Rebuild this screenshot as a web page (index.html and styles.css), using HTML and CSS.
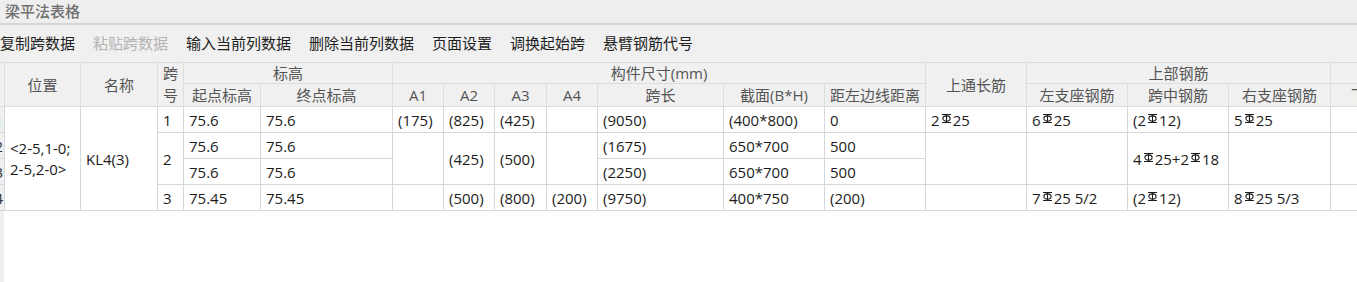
FILE: index.html
```html
<!DOCTYPE html>
<html lang="zh-CN">
<head>
<meta charset="utf-8">
<title>梁平法表格</title>
<link rel="stylesheet" href="styles.css">
</head>
<body>
<div class="titlebar"><span class="title">梁平法表格</span></div>
<div class="toolbar">
  <span class="tool">复制跨数据</span>
  <span class="tool disabled">粘贴跨数据</span>
  <span class="tool">输入当前列数据</span>
  <span class="tool">删除当前列数据</span>
  <span class="tool">页面设置</span>
  <span class="tool">调换起始跨</span>
  <span class="tool">悬臂钢筋代号</span>
</div>
<div class="grid-wrap">
<table class="grid">
  <colgroup>
    <col class="c-rh"><col class="c-pos"><col class="c-name"><col class="c-span">
    <col class="c-elev"><col class="c-elev2">
    <col class="c-a"><col class="c-a"><col class="c-a3"><col class="c-a">
    <col class="c-len"><col class="c-w"><col class="c-w"><col class="c-w">
    <col class="c-w"><col class="c-w"><col class="c-w2">
    <col class="c-w"><col class="c-w"><col class="c-w">
  </colgroup>
  <thead>
    <tr class="h1">
      <th class="rh" rowspan="2"></th>
      <th rowspan="2">位置</th>
      <th rowspan="2">名称</th>
      <th rowspan="2" class="kua"><div class="kua-top">跨</div><div class="kua-bot">号</div></th>
      <th colspan="2">标高</th>
      <th colspan="7">构件尺寸(mm)</th>
      <th rowspan="2">上通长筋</th>
      <th colspan="3">上部钢筋</th>
      <th colspan="3"></th>
    </tr>
    <tr class="h2">
      <th>起点标高</th>
      <th>终点标高</th>
      <th>A1</th>
      <th>A2</th>
      <th>A3</th>
      <th>A4</th>
      <th>跨长</th>
      <th>截面(B*H)</th>
      <th>距左边线距离</th>
      <th>左支座钢筋</th>
      <th>跨中钢筋</th>
      <th>右支座钢筋</th>
      <th>下通长筋</th>
      <th></th>
      <th></th>
    </tr>
  </thead>
  <tbody>
    <tr class="r1">
      <th class="rh">1</th>
      <td rowspan="4" class="pos">&lt;2-5,1-0;<br>2-5,2-0&gt;</td>
      <td rowspan="4">KL4(3)</td>
      <td>1</td>
      <td>75.6</td>
      <td>75.6</td>
      <td>(175)</td>
      <td>(825)</td>
      <td>(425)</td>
      <td></td>
      <td>(9050)</td>
      <td>(400*800)</td>
      <td>0</td>
      <td>2<svg class="rb" viewBox="0 0 11 9"><path d="M1 0.5H10M1 8.5H10M5.5 0.5V8.5"/><ellipse cx="5.5" cy="4.5" rx="3.6" ry="2.6"/></svg>25</td>
      <td>6<svg class="rb" viewBox="0 0 11 9"><path d="M1 0.5H10M1 8.5H10M5.5 0.5V8.5"/><ellipse cx="5.5" cy="4.5" rx="3.6" ry="2.6"/></svg>25</td>
      <td>(2<svg class="rb" viewBox="0 0 11 9"><path d="M1 0.5H10M1 8.5H10M5.5 0.5V8.5"/><ellipse cx="5.5" cy="4.5" rx="3.6" ry="2.6"/></svg>12)</td>
      <td>5<svg class="rb" viewBox="0 0 11 9"><path d="M1 0.5H10M1 8.5H10M5.5 0.5V8.5"/><ellipse cx="5.5" cy="4.5" rx="3.6" ry="2.6"/></svg>25</td>
      <td></td><td></td><td></td>
    </tr>
    <tr class="r2">
      <th class="rh">2</th>
      <td rowspan="2">2</td>
      <td>75.6</td>
      <td>75.6</td>
      <td rowspan="2"></td>
      <td rowspan="2">(425)</td>
      <td rowspan="2">(500)</td>
      <td rowspan="2"></td>
      <td>(1675)</td>
      <td>650*700</td>
      <td>500</td>
      <td rowspan="2"></td>
      <td rowspan="2"></td>
      <td rowspan="2">4<svg class="rb" viewBox="0 0 11 9"><path d="M1 0.5H10M1 8.5H10M5.5 0.5V8.5"/><ellipse cx="5.5" cy="4.5" rx="3.6" ry="2.6"/></svg>25+2<svg class="rb" viewBox="0 0 11 9"><path d="M1 0.5H10M1 8.5H10M5.5 0.5V8.5"/><ellipse cx="5.5" cy="4.5" rx="3.6" ry="2.6"/></svg>18</td>
      <td rowspan="2"></td>
      <td rowspan="2"></td><td rowspan="2"></td><td rowspan="2"></td>
    </tr>
    <tr class="r3">
      <th class="rh">3</th>
      <td>75.6</td>
      <td>75.6</td>
      <td>(2250)</td>
      <td>650*700</td>
      <td>500</td>
    </tr>
    <tr class="r4">
      <th class="rh">4</th>
      <td>3</td>
      <td>75.45</td>
      <td>75.45</td>
      <td></td>
      <td>(500)</td>
      <td>(800)</td>
      <td>(200)</td>
      <td>(9750)</td>
      <td>400*750</td>
      <td>(200)</td>
      <td></td>
      <td>7<svg class="rb" viewBox="0 0 11 9"><path d="M1 0.5H10M1 8.5H10M5.5 0.5V8.5"/><ellipse cx="5.5" cy="4.5" rx="3.6" ry="2.6"/></svg>25 5/2</td>
      <td>(2<svg class="rb" viewBox="0 0 11 9"><path d="M1 0.5H10M1 8.5H10M5.5 0.5V8.5"/><ellipse cx="5.5" cy="4.5" rx="3.6" ry="2.6"/></svg>12)</td>
      <td>8<svg class="rb" viewBox="0 0 11 9"><path d="M1 0.5H10M1 8.5H10M5.5 0.5V8.5"/><ellipse cx="5.5" cy="4.5" rx="3.6" ry="2.6"/></svg>25 5/3</td>
      <td></td><td></td><td></td>
    </tr>
  </tbody>
</table>
</div>
</body>
</html>
```

FILE: styles.css
```css
* { box-sizing: border-box; }

html, body {
  margin: 0;
  padding: 0;
}

body {
  width: 1357px;
  height: 282px;
  overflow: hidden;
  background: #f0f0f0;
  font-family: "Open Sans", "Noto Sans CJK SC", sans-serif;
}

.titlebar {
  height: 25px;
  background: #eeeeee;
  border-bottom: 2px solid #d6d6d6;
  display: flex;
  align-items: center;
  padding-left: 5px;
}

.title {
  font-size: 15px;
  line-height: 1;
  color: #707070;
  font-weight: 500;
}

.toolbar {
  height: 37px;
  display: flex;
  align-items: center;
  gap: 18px;
  font-size: 15px;
  color: #1e1e1e;
}

.tool {
  line-height: 1;
  white-space: nowrap;
}

.tool.disabled {
  color: #b3b3b3;
}

.grid-wrap {
  height: 220px;
  overflow: hidden;
  background: linear-gradient(to right, #f0f0f0 4px, #ffffff 4px);
}

.grid {
  margin-left: -16px;
  border-collapse: collapse;
  table-layout: fixed;
  width: 1649px;
  font-size: 15px;
  border-top: 1px solid #d2d2d2;
}

.c-rh { width: 20px; }
.c-pos { width: 76px; }
.c-name { width: 77px; }
.c-span { width: 26px; }
.c-elev { width: 77px; }
.c-elev2 { width: 132px; }
.c-a { width: 51px; }
.c-a3 { width: 52px; }
.c-len { width: 126px; }
.c-w { width: 101px; }
.c-w2 { width: 102px; }

.grid th,
.grid td {
  padding: 0;
  white-space: nowrap;
  overflow: hidden;
  line-height: 20px;
}

.grid thead th {
  background: #f0f0f0;
  color: #555555;
  font-weight: 400;
  text-align: center;
  border: 1px solid #dcdcdc;
}

.grid .h1 { height: 21px; }
.grid .h2 { height: 22px; }

.grid th.kua {
  vertical-align: top;
  padding-top: 0;
}

.kua-top {
  height: 21px;
  line-height: 21px;
}

.kua-bot {
  height: 22px;
  line-height: 22px;
}

.grid tbody td {
  background: #ffffff;
  color: #1c1c1c;
  border: 1px solid #d5d8dc;
  padding-left: 5px;
  text-align: left;
  vertical-align: middle;
}

.grid tbody th.rh {
  background: #f0f0f0;
  color: #333;
  font-weight: 400;
  text-align: right;
  padding-right: 1px;
  border: 1px solid #d5d8dc;
}

.grid .r1 { height: 26px; }
.grid .r2 { height: 26px; }
.grid .r3 { height: 26px; }
.grid .r4 { height: 26px; }

.grid td.pos {
  line-height: 21px;
  padding-left: 5px;
}

.rb {
  width: 11px;
  height: 9px;
  vertical-align: 3px;
  margin: 0 1px;
  fill: none;
  stroke: #1c1c1c;
  stroke-width: 1.1;
}
```
